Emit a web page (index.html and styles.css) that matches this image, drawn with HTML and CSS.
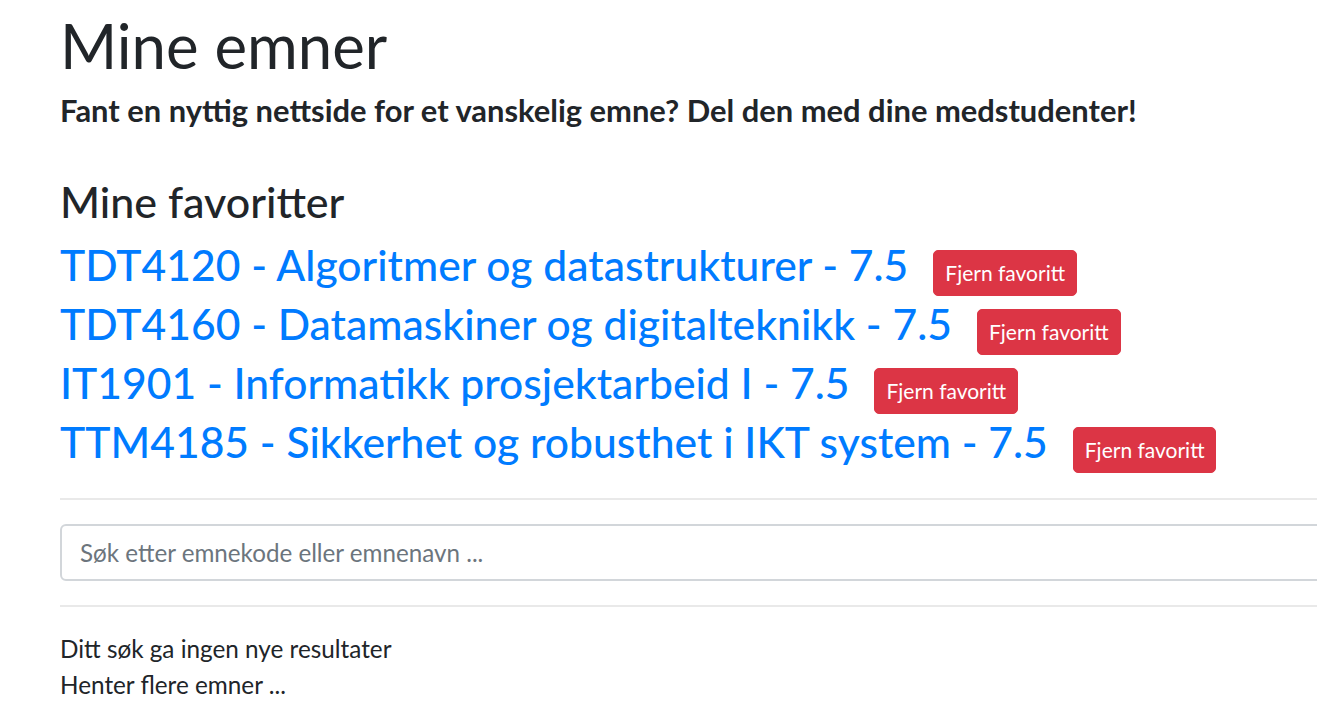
FILE: index.html
```html
<!DOCTYPE html>
<html lang="no">
<head>
<meta charset="utf-8">
<title>Mine emner</title>
<link rel="stylesheet" href="styles.css">
</head>
<body>
<div class="page">
  <div class="container">
    <h1 class="title">Mine emner</h1>
    <h5 class="lead">Fant en nyttig nettside for et vanskelig emne? Del den med dine medstudenter!</h5>
    <h3 class="section-title">Mine favoritter</h3>
    <ul class="favorites">
      <li class="fav-row"><a class="course-link" href="#">TDT4120 - Algoritmer og datastrukturer - 7.5</a><button class="btn-remove" type="button">Fjern favoritt</button></li>
      <li class="fav-row"><a class="course-link" href="#">TDT4160 - Datamaskiner og digitalteknikk - 7.5</a><button class="btn-remove" type="button">Fjern favoritt</button></li>
      <li class="fav-row"><a class="course-link" href="#">IT1901 - Informatikk prosjektarbeid I - 7.5</a><button class="btn-remove" type="button">Fjern favoritt</button></li>
      <li class="fav-row"><a class="course-link" href="#">TTM4185 - Sikkerhet og robusthet i IKT system - 7.5</a><button class="btn-remove" type="button">Fjern favoritt</button></li>
    </ul>
    <hr class="divider divider-first">
    <input class="search" type="text" placeholder="Søk etter emnekode eller emnenavn ...">
    <hr class="divider">
    <p class="status">Ditt søk ga ingen nye resultater</p>
    <p class="status">Henter flere emner ...</p>
  </div>
</div>
</body>
</html>
```

FILE: styles.css
```css
html, body {
  margin: 0;
  padding: 0;
  background: #ffffff;
  overflow: hidden;
}

body {
  font-family: Lato, "Open Sans", "Liberation Sans", sans-serif;
  color: #212529;
  font-size: 24px;
  line-height: 1.5;
}

.page {
  padding: 9px 0 0 60px;
}

.container {
  width: 1300px;
}

.title {
  margin: 0 0 12px;
  font-size: 61.7px;
  font-weight: 400;
  line-height: 72px;
}

.lead {
  margin: 0;
  font-size: 30.9px;
  font-weight: 700;
  line-height: 36px;
}

.section-title {
  margin: 48px 0 8px;
  font-size: 43px;
  font-weight: 500;
  line-height: 50px;
}

.favorites {
  list-style: none;
  margin: 0;
  padding: 0;
}

.fav-row {
  display: flex;
  align-items: baseline;
  height: 59px;
  line-height: 59px;
}

.course-link {
  color: #007bff;
  text-decoration: none;
  font-size: 42.6px;
  font-weight: 500;
}

.btn-remove {
  margin-left: 25px;
  padding: 6px 11px;
  border: 1.5px solid #dc3545;
  border-radius: 5px;
  background: #dc3545;
  color: #ffffff;
  font-family: inherit;
  font-size: 21px;
  line-height: 31.5px;
}

.divider {
  margin: 24px 0;
  border: 0;
  border-top: 2px solid #e9e9e9;
}

.divider-first {
  margin-top: 27px;
}

.search {
  display: block;
  box-sizing: border-box;
  width: 100%;
  height: 57px;
  padding: 9px 18px;
  border: 2px solid #d2d6da;
  border-radius: 6px;
  font-family: inherit;
  font-size: 24.2px;
  color: #495057;
}

.search::placeholder {
  color: #6c757d;
}

.status {
  margin: 0;
  font-size: 24.3px;
  line-height: 36px;
}
```
